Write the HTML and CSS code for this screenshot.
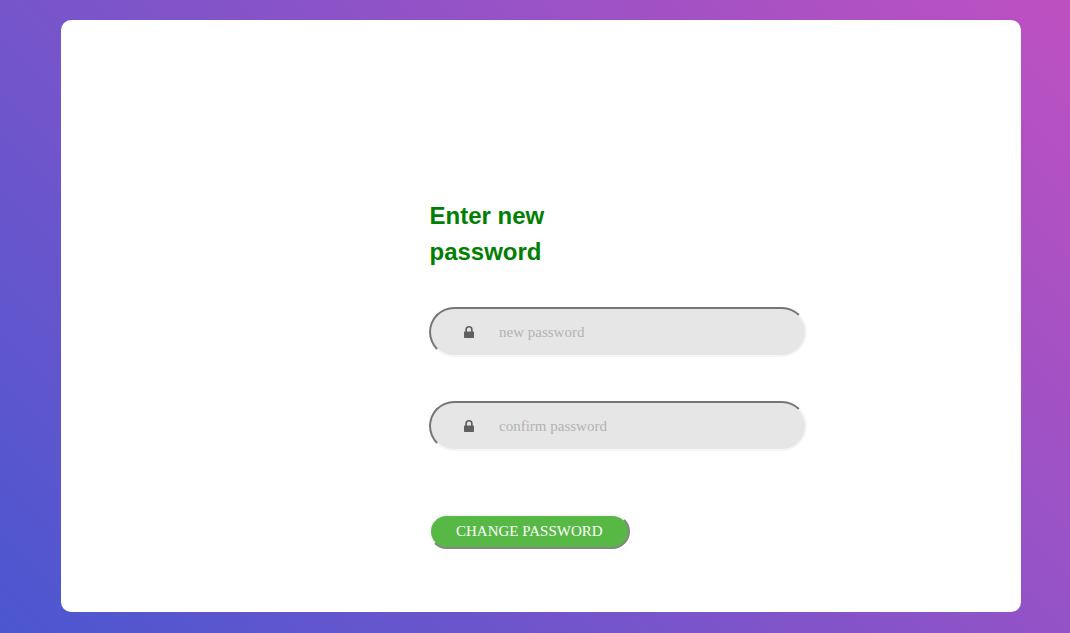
FILE: index.html
```html
<!DOCTYPE html>
<html lang="en">
<head>
<meta charset="utf-8">
<title>Change password</title>
<link rel="stylesheet" href="styles.css">
</head>
<body>
<main class="card">
  <form class="form">
    <h1 class="title">Enter new password</h1>
    <label class="field">
      <svg class="lock" viewBox="0 0 10 12"><path fill-rule="evenodd" d="M1.3 5.5V3.6a3.7 3.6 0 0 1 7.4 0v1.9H9.3q.7 0 .7.7v5.1q0 .7-.7.7H.7q-.7 0-.7-.7V6.2q0-.7.7-.7zM3 5.5h4V3.6a2 2 0 0 0-4 0z"/></svg>
      <span class="placeholder">new password</span>
    </label>
    <label class="field">
      <svg class="lock" viewBox="0 0 10 12"><path fill-rule="evenodd" d="M1.3 5.5V3.6a3.7 3.6 0 0 1 7.4 0v1.9H9.3q.7 0 .7.7v5.1q0 .7-.7.7H.7q-.7 0-.7-.7V6.2q0-.7.7-.7zM3 5.5h4V3.6a2 2 0 0 0-4 0z"/></svg>
      <span class="placeholder">confirm password</span>
    </label>
    <button class="submit" type="button">CHANGE PASSWORD</button>
  </form>
</main>
</body>
</html>
```
FILE: styles.css
```css
* { box-sizing: border-box; }
body {
  margin: 0;
  height: 633px;
  padding: 20px 49px 21px 61px;
  overflow: hidden;
  background: linear-gradient(-135deg, #be50c1, #4b57d0);
}
.card {
  height: 592px;
  padding: 178px 214px 0 368px;
  background: #fff;
  border-radius: 10px;
}
.form { display: flex; flex-direction: column; align-items: flex-start; }
.title {
  width: 150px;
  margin: 0 0 37px;
  padding-left: 0.5px;
  font: bold 24px/36px "Liberation Sans", Arial, sans-serif;
  color: green;
}
.field {
  display: flex;
  align-items: center;
  width: 378px;
  height: 50px;
  margin-bottom: 44px;
  padding-left: 33px;
  background: #e6e6e6;
  border: 2px solid;
  border-color: #767676 #f5f5f5 #f5f5f5 #767676;
  border-radius: 25px;
}
.lock { width: 10px; height: 12px; margin-right: 25px; fill: #606060; }
.placeholder {
  font: 15px/24px "Liberation Serif", Georgia, serif;
  color: #b3b3b3;
  white-space: nowrap;
}
.submit {
  width: 201px;
  height: 35px;
  margin-top: 19px;
  padding: 0 0 2px 25px;
  text-align: left;
  background: #57b846;
  border: 2px solid;
  border-color: #f5f5f5 #858585 #858585 #f5f5f5;
  border-radius: 25px;
  color: #fff;
  font: 15px/20px "Liberation Serif", Georgia, serif;
  white-space: nowrap;
}
```
